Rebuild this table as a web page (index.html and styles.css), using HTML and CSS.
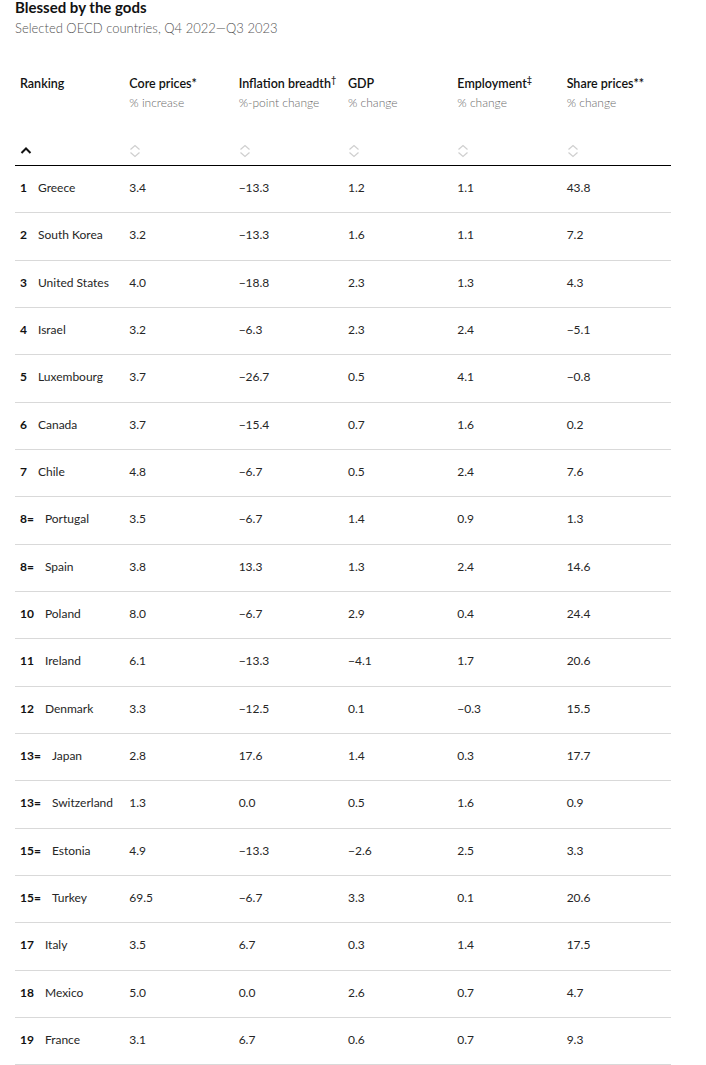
FILE: index.html
```html
<!DOCTYPE html>
<html lang="en">
<head>
<meta charset="utf-8">
<title>Blessed by the gods</title>
<link rel="stylesheet" href="styles.css">
</head>
<body>
<div class="wrap">
  <h1 class="title">Blessed by the gods</h1>
  <p class="subtitle">Selected OECD countries, Q4 2022—Q3 2023</p>

  <div class="table" role="table">
    <div class="head" role="row">
      <div class="th" role="columnheader">
        <div class="name">Ranking</div>
        <div class="unit">&nbsp;</div>
        <div class="sort"><svg width="12" height="14" viewBox="0 0 12 14"><path d="M1.5 9 L6 4.5 L10.5 9" fill="none" stroke="#121212" stroke-width="2"/></svg></div>
      </div>
      <div class="th" role="columnheader">
        <div class="name">Core prices*</div>
        <div class="unit">% increase</div>
        <div class="sort"><svg width="12" height="14" viewBox="0 0 12 14"><path d="M1.5 5.5 L6 1.5 L10.5 5.5 M1.5 8.5 L6 12.5 L10.5 8.5" fill="none" stroke="#cfcfcf" stroke-width="1.2"/></svg></div>
      </div>
      <div class="th" role="columnheader">
        <div class="name">Inflation breadth<sup>†</sup></div>
        <div class="unit">%-point change</div>
        <div class="sort"><svg width="12" height="14" viewBox="0 0 12 14"><path d="M1.5 5.5 L6 1.5 L10.5 5.5 M1.5 8.5 L6 12.5 L10.5 8.5" fill="none" stroke="#cfcfcf" stroke-width="1.2"/></svg></div>
      </div>
      <div class="th" role="columnheader">
        <div class="name">GDP</div>
        <div class="unit">% change</div>
        <div class="sort"><svg width="12" height="14" viewBox="0 0 12 14"><path d="M1.5 5.5 L6 1.5 L10.5 5.5 M1.5 8.5 L6 12.5 L10.5 8.5" fill="none" stroke="#cfcfcf" stroke-width="1.2"/></svg></div>
      </div>
      <div class="th" role="columnheader">
        <div class="name">Employment<sup>‡</sup></div>
        <div class="unit">% change</div>
        <div class="sort"><svg width="12" height="14" viewBox="0 0 12 14"><path d="M1.5 5.5 L6 1.5 L10.5 5.5 M1.5 8.5 L6 12.5 L10.5 8.5" fill="none" stroke="#cfcfcf" stroke-width="1.2"/></svg></div>
      </div>
      <div class="th" role="columnheader">
        <div class="name">Share prices**</div>
        <div class="unit">% change</div>
        <div class="sort"><svg width="12" height="14" viewBox="0 0 12 14"><path d="M1.5 5.5 L6 1.5 L10.5 5.5 M1.5 8.5 L6 12.5 L10.5 8.5" fill="none" stroke="#cfcfcf" stroke-width="1.2"/></svg></div>
      </div>
    </div>

    <div class="row"><div class="td"><b class="rank">1</b>Greece</div><div class="td">3.4</div><div class="td">−13.3</div><div class="td">1.2</div><div class="td">1.1</div><div class="td">43.8</div></div>
    <div class="row"><div class="td"><b class="rank">2</b>South Korea</div><div class="td">3.2</div><div class="td">−13.3</div><div class="td">1.6</div><div class="td">1.1</div><div class="td">7.2</div></div>
    <div class="row"><div class="td"><b class="rank">3</b>United States</div><div class="td">4.0</div><div class="td">−18.8</div><div class="td">2.3</div><div class="td">1.3</div><div class="td">4.3</div></div>
    <div class="row"><div class="td"><b class="rank">4</b>Israel</div><div class="td">3.2</div><div class="td">−6.3</div><div class="td">2.3</div><div class="td">2.4</div><div class="td">−5.1</div></div>
    <div class="row"><div class="td"><b class="rank">5</b>Luxembourg</div><div class="td">3.7</div><div class="td">−26.7</div><div class="td">0.5</div><div class="td">4.1</div><div class="td">−0.8</div></div>
    <div class="row"><div class="td"><b class="rank">6</b>Canada</div><div class="td">3.7</div><div class="td">−15.4</div><div class="td">0.7</div><div class="td">1.6</div><div class="td">0.2</div></div>
    <div class="row"><div class="td"><b class="rank">7</b>Chile</div><div class="td">4.8</div><div class="td">−6.7</div><div class="td">0.5</div><div class="td">2.4</div><div class="td">7.6</div></div>
    <div class="row"><div class="td"><b class="rank">8=</b>Portugal</div><div class="td">3.5</div><div class="td">−6.7</div><div class="td">1.4</div><div class="td">0.9</div><div class="td">1.3</div></div>
    <div class="row"><div class="td"><b class="rank">8=</b>Spain</div><div class="td">3.8</div><div class="td">13.3</div><div class="td">1.3</div><div class="td">2.4</div><div class="td">14.6</div></div>
    <div class="row"><div class="td"><b class="rank">10</b>Poland</div><div class="td">8.0</div><div class="td">−6.7</div><div class="td">2.9</div><div class="td">0.4</div><div class="td">24.4</div></div>
    <div class="row"><div class="td"><b class="rank">11</b>Ireland</div><div class="td">6.1</div><div class="td">−13.3</div><div class="td">−4.1</div><div class="td">1.7</div><div class="td">20.6</div></div>
    <div class="row"><div class="td"><b class="rank">12</b>Denmark</div><div class="td">3.3</div><div class="td">−12.5</div><div class="td">0.1</div><div class="td">−0.3</div><div class="td">15.5</div></div>
    <div class="row"><div class="td"><b class="rank">13=</b>Japan</div><div class="td">2.8</div><div class="td">17.6</div><div class="td">1.4</div><div class="td">0.3</div><div class="td">17.7</div></div>
    <div class="row"><div class="td"><b class="rank">13=</b>Switzerland</div><div class="td">1.3</div><div class="td">0.0</div><div class="td">0.5</div><div class="td">1.6</div><div class="td">0.9</div></div>
    <div class="row"><div class="td"><b class="rank">15=</b>Estonia</div><div class="td">4.9</div><div class="td">−13.3</div><div class="td">−2.6</div><div class="td">2.5</div><div class="td">3.3</div></div>
    <div class="row"><div class="td"><b class="rank">15=</b>Turkey</div><div class="td">69.5</div><div class="td">−6.7</div><div class="td">3.3</div><div class="td">0.1</div><div class="td">20.6</div></div>
    <div class="row"><div class="td"><b class="rank">17</b>Italy</div><div class="td">3.5</div><div class="td">6.7</div><div class="td">0.3</div><div class="td">1.4</div><div class="td">17.5</div></div>
    <div class="row"><div class="td"><b class="rank">18</b>Mexico</div><div class="td">5.0</div><div class="td">0.0</div><div class="td">2.6</div><div class="td">0.7</div><div class="td">4.7</div></div>
    <div class="row"><div class="td"><b class="rank">19</b>France</div><div class="td">3.1</div><div class="td">6.7</div><div class="td">0.6</div><div class="td">0.7</div><div class="td">9.3</div></div>
  </div>
</div>
</body>
</html>
```

FILE: styles.css
```css
html, body {
  margin: 0;
  padding: 0;
  background: #ffffff;
}

body {
  font-family: Lato, "Noto Sans", "Liberation Sans", sans-serif;
  color: #121212;
}

.wrap {
  padding: 0 0 0 15px;
  width: 656px;
}

.title {
  margin: -1px 0 0 0;
  font-size: 15px;
  line-height: 17px;
  font-weight: 700;
  color: #121212;
}

.subtitle {
  margin: 3px 0 0 0;
  font-size: 13px;
  line-height: 18px;
  font-weight: 300;
  color: #555555;
}

.table {
  margin-top: 23px;
  width: 656px;
}

.head,
.row {
  display: grid;
  grid-template-columns: repeat(6, 1fr);
}

.head {
  border-bottom: 1.5px solid #000;
}

.th {
  padding: 16px 5px 7px 5px;
  min-width: 0;
}

.name {
  font-size: 12.5px;
  line-height: 16px;
  font-weight: 600;
  color: #121212;
  white-space: nowrap;
}

.name sup {
  font-size: 9px;
  line-height: 0;
  vertical-align: 5px;
}

.unit {
  margin-top: 2px;
  font-size: 12px;
  line-height: 18px;
  font-weight: 300;
  color: #6b6b6b;
  white-space: nowrap;
}

.sort {
  margin-top: 32px;
  height: 14px;
}

.sort svg {
  display: block;
}

.row {
  height: 47.33px;
  box-sizing: border-box;
  border-bottom: 1px solid #d9d9d9;
  align-items: center;
}

.td {
  padding: 0 5px 2px 5px;
  font-size: 12px;
  line-height: 16px;
  color: #262626;
  white-space: nowrap;
  min-width: 0;
}

.rank {
  font-weight: 700;
  color: #121212;
  margin-right: 11px;
}
```
